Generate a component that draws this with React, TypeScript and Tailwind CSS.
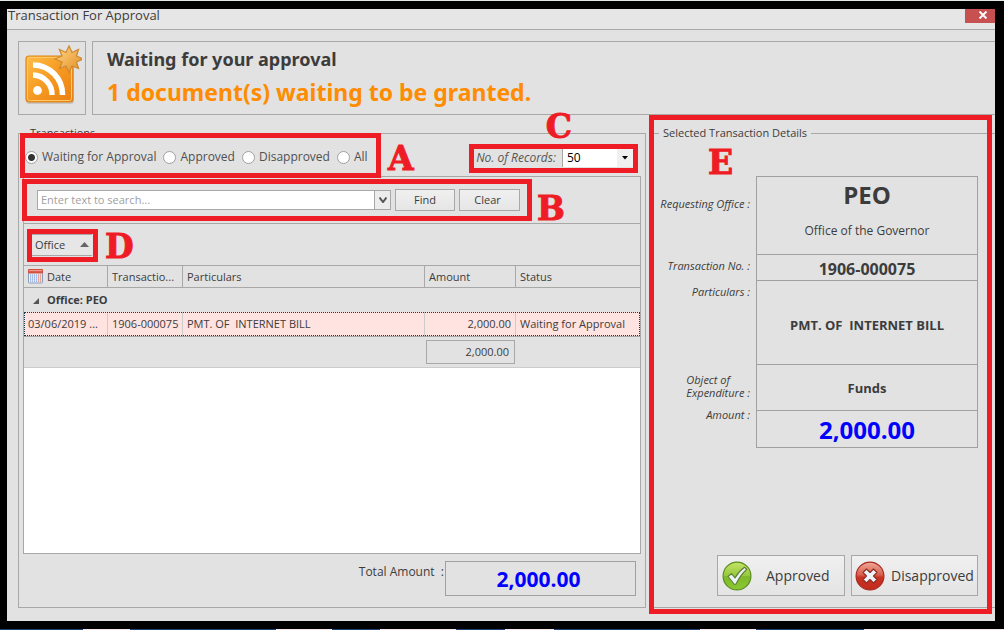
import React from "react";

const FRAME = "absolute border-5 border-[#ee1c25] pointer-events-none z-10";
const LETTER =
  "absolute z-10 pointer-events-none font-['DejaVu_Serif',serif] text-[33px] leading-[33px] font-bold text-[#ee1c25] [-webkit-text-stroke:1px_#ee1c25]";

function FeedIcon() {
  return (
    <svg viewBox="0 0 60 62" className="mb-1 h-[62px] w-[60px]" aria-hidden="true">
      <defs>
        <linearGradient id="feed" x1="0" y1="0" x2="1" y2="1">
          <stop offset="0" stopColor="#ffbe48" />
          <stop offset="0.5" stopColor="#f59a22" />
          <stop offset="1" stopColor="#ea7f10" />
        </linearGradient>
        <linearGradient id="star" x1="0" y1="0" x2="1" y2="1">
          <stop offset="0" stopColor="#ffd98a" />
          <stop offset="1" stopColor="#e28a1e" />
        </linearGradient>
      </defs>
      <rect x="4" y="13" width="48" height="46" rx="3" fill="#000" opacity="0.12" />
      <rect x="4" y="11" width="47" height="46" rx="3" fill="url(#feed)" stroke="#e0851c" strokeWidth="1.2" />
      <rect x="5.5" y="12.5" width="44" height="43" rx="2" fill="none" stroke="#ffc869" strokeWidth="1" />
      <circle cx="15.5" cy="45.5" r="4.4" fill="#fff" />
      <path d="M11 30a19.500 19.500 0 0 1 19 20" fill="none" stroke="#fff" strokeWidth="5.4" />
      <path d="M11 20a29.500 29.500 0 0 1 29.500 30" fill="none" stroke="#fff" strokeWidth="5.6" />
      <path
        d="M47 1l3 6.500 6.500-3-2 6.500L61 14l-6.500 3 2 6.500-6.500-2.500L47 27.500 44 21l-6.500 2.500 2.500-6.500-7-3 7-3-2.500-6.500L44 7.500z"
        fill="url(#star)"
        stroke="#cf8a34"
        strokeWidth="1.3"
      />
    </svg>
  );
}

function CalendarIcon() {
  return (
    <svg viewBox="0 0 15 15" className="h-[15px] w-[15px] shrink-0" aria-hidden="true">
      <rect x="0.5" y="0.5" width="14" height="13.5" rx="1" fill="#eef3fb" stroke="#8a9bb5" />
      <rect x="0" y="0" width="15" height="4.5" rx="1" fill="#d4513f" />
      <rect x="1" y="1" width="13" height="1.2" fill="#ee9a8b" />
      <g fill="#7b9fe0">
        {[5.5, 7.5, 9.5, 11.5].map((y) =>
          [2, 4, 6, 8].map((x) => <rect key={`${x}-${y}`} x={x} y={y} width="1.2" height="1.2" />)
        )}
      </g>
      <g fill="#e0705c">
        {[5.5, 7.5, 9.5, 11.5].map((y) =>
          [10, 12].map((x) => <rect key={`${x}-${y}`} x={x} y={y} width="1.2" height="1.2" />)
        )}
      </g>
    </svg>
  );
}

function ApproveIcon() {
  return (
    <svg viewBox="0 0 30 30" className="size-[30px] shrink-0" aria-hidden="true">
      <defs>
        <linearGradient id="green" x1="0" y1="0" x2="0" y2="1">
          <stop offset="0" stopColor="#c6e36a" />
          <stop offset="0.5" stopColor="#94c93a" />
          <stop offset="0.52" stopColor="#7fb92a" />
          <stop offset="1" stopColor="#8cc832" />
        </linearGradient>
      </defs>
      <circle cx="15" cy="15" r="13.9" fill="url(#green)" stroke="#5a8c22" strokeWidth="1.2" />
      <path
        d="M6 15.500l3.500-2.800 3.500 4.300c2.700-5 5.500-8 9.500-10.800l2.200 2.300c-4.500 3.800-7.700 8.300-10.700 14.500l-1.500 0.500z"
        fill="#eef3f8"
        stroke="#5d7f35"
        strokeWidth="1.1"
        strokeLinejoin="round"
      />
    </svg>
  );
}

function RejectIcon() {
  return (
    <svg viewBox="0 0 30 30" className="size-[30px] shrink-0" aria-hidden="true">
      <defs>
        <linearGradient id="red" x1="0" y1="0" x2="0" y2="1">
          <stop offset="0" stopColor="#f0a898" />
          <stop offset="0.45" stopColor="#d9604f" />
          <stop offset="0.55" stopColor="#c93324" />
          <stop offset="1" stopColor="#c22a1c" />
        </linearGradient>
      </defs>
      <circle cx="15" cy="15" r="13.9" fill="url(#red)" stroke="#a82a20" strokeWidth="1.2" />
      <path
        d="M11.500 8l3.500 3.500L18.500 8l3.500 3.500-3.500 3.500 3.500 3.500-3.500 3.500-3.500-3.500-3.500 3.500L8 18.500l3.500-3.500L8 11.500z"
        fill="#eef3f8"
        stroke="#8e2a22"
        strokeWidth="1.1"
        strokeLinejoin="round"
      />
    </svg>
  );
}

function RadioOption({ label, checked }: { label: string; checked?: boolean }) {
  return (
    <label className="flex items-center gap-1 text-[12px] leading-4 whitespace-nowrap text-[#505050]">
      <input
        type="radio"
        name="status"
        defaultChecked={checked}
        className="size-[13px] shrink-0 appearance-none rounded-full border border-[#a0a0a0] bg-white checked:bg-[radial-gradient(circle,#333_0_3px,#fff_4px)]"
      />
      {label}
    </label>
  );
}

const TH = "h-[22px] border-b border-[#a8a8a8] px-1 text-left font-normal";
const TD = "h-6 bg-[#ffe3e0] px-1 whitespace-pre";
const CELL = "flex items-center justify-center border-b border-[#a0a0a0] font-bold";
const KEY = "pr-[2px] text-right text-[11px] leading-[13px] italic";

export default function App() {
  return (
    <div className="flex min-h-screen flex-col border-t border-[#e3e8e8] bg-black font-['Open_Sans','Noto_Sans',sans-serif] text-[#3c3c3c]">
      <div className="mt-2 mr-[9px] mb-2 ml-[7px] flex grow flex-col overflow-hidden bg-[#e2e2e2]">
        <header className="flex h-[21px] items-start justify-between border-b border-[#a8a8a8] bg-[#e6e6e6]">
          <h1 className="pl-px text-[13px] leading-[13px] whitespace-nowrap">Transaction For Approval</h1>
          <button
            type="button"
            aria-label="Close"
            className="flex h-[14px] w-[30px] items-center justify-center bg-[#c75050] pb-[2px] pl-[6px]"
          >
            <svg viewBox="0 0 10 8" className="h-2 w-[10px]" aria-hidden="true">
              <path d="M1.500 0.500l7 7M8.500 0.500l-7 7" stroke="#fff" strokeWidth="2" />
            </svg>
          </button>
        </header>

        <section className="mt-[11px] ml-[11px] flex h-[74px] gap-[6px]">
          <div className="flex w-[68px] shrink-0 items-center justify-center border border-[#a8a8a8]">
            <FeedIcon />
          </div>
          <div className="grow border-y border-l border-[#a8a8a8] pl-[14px] font-['Noto_Sans','Open_Sans',sans-serif] font-bold">
            <h2 className="pt-[5px] text-[18px] leading-6">Waiting for your approval</h2>
            <p className="pt-[5px] text-[23px] leading-8 text-[#ff8c00]">1 document(s) waiting to be granted.</p>
          </div>
        </section>

        <main className="mt-[10px] mb-[13px] ml-[11px] flex grow gap-2">
          <fieldset className="relative flex min-w-0 grow flex-col border border-[#a8a8a8] px-1 pb-[11px]">
            <legend className="ml-[3px] px-1 text-[11px] leading-4">Transactions</legend>
            <div className="flex h-[35px] shrink-0 items-start justify-between pt-2 pr-2 pl-[2px]">
              <div className="flex gap-[7px]">
                <RadioOption label="Waiting for Approval" checked />
                <RadioOption label="Approved" />
                <RadioOption label="Disapproved" />
                <RadioOption label="All" />
              </div>
              <div className="flex items-center">
                <label htmlFor="records" className="pr-[6px] text-[12px] leading-4 whitespace-nowrap text-[#555] italic">
                  No. of Records:
                </label>
                <div className="relative flex">
                  <select
                    id="records"
                    className="h-[18px] w-[71px] appearance-none border-l border-[#a8a8a8] bg-white pl-1 text-[12px] leading-4 text-black"
                  >
                    <option>50</option>
                  </select>
                  <span className="pointer-events-none absolute inset-y-0 right-0 flex w-4 items-center justify-center bg-[#f0f0f0]">
                    <svg viewBox="0 0 6 4" className="h-1 w-[6px]" aria-hidden="true">
                      <path d="M0 0h6L3 3.500z" fill="#000" />
                    </svg>
                  </span>
                </div>
              </div>
            </div>

            <div className="flex grow flex-col border border-[#a8a8a8] bg-white text-[11px] leading-4">
              <div className="flex h-[47px] shrink-0 items-center gap-1 border-b border-[#a8a8a8] bg-[#e2e2e2] pl-[13px]">
                <div className="flex h-5 w-[354px] border border-[#a8a8a8] bg-white">
                  <input
                    type="text"
                    aria-label="Search"
                    placeholder="Enter text to search..."
                    className="min-w-0 grow px-[3px] placeholder:text-[#a0a0a0]"
                  />
                  <button
                    type="button"
                    aria-label="Search history"
                    className="flex w-4 items-center justify-center border-l border-[#a8a8a8] bg-[#ececec]"
                  >
                    <svg viewBox="0 0 8 6" className="h-[6px] w-2" aria-hidden="true">
                      <path d="M0.500 0.500L4 5L7.500 0.500" fill="none" stroke="#555" strokeWidth="2" />
                    </svg>
                  </button>
                </div>
                <button
                  type="button"
                  className="h-[22px] w-[60px] border border-[#a8a8a8] bg-linear-to-b from-[#f0f0f0] to-[#e6e6e6]"
                >
                  Find
                </button>
                <button
                  type="button"
                  className="h-[22px] w-[61px] border border-[#a8a8a8] bg-linear-to-b from-[#f0f0f0] to-[#e6e6e6] pr-1"
                >
                  Clear
                </button>
              </div>

              <div className="flex h-[42px] shrink-0 items-center border-b border-[#a8a8a8] bg-[#e2e2e2] pl-2">
                <button
                  type="button"
                  className="flex h-[22px] w-[60px] items-center justify-between border-y border-[#a8a8a8] bg-[#e6e6e6] px-[3px]"
                >
                  Office
                  <svg viewBox="0 0 9 5" className="h-[5px] w-[9px]" aria-hidden="true">
                    <path d="M0 5h9L4.500 0z" fill="#666" />
                  </svg>
                </button>
              </div>

              <table className="w-full table-fixed border-separate border-spacing-0 bg-[#e2e2e2]">
                <colgroup>
                  <col className="w-[84px]" />
                  <col className="w-[75px]" />
                  <col />
                  <col className="w-[91px]" />
                  <col className="w-[124px]" />
                </colgroup>
                <thead>
                  <tr>
                    <th className={`${TH} border-r`}>
                      <span className="flex items-center gap-1">
                        <CalendarIcon />
                        Date
                      </span>
                    </th>
                    <th className={`${TH} border-r`}>Transactio...</th>
                    <th className={`${TH} border-r`}>Particulars</th>
                    <th className={`${TH} border-r`}>Amount</th>
                    <th className={TH}>Status</th>
                  </tr>
                </thead>
                <tbody>
                  <tr>
                    <td colSpan={5} className="h-6 px-2">
                      <span className="flex items-center gap-2 font-bold">
                        <svg viewBox="0 0 7 7" className="size-[7px]" aria-hidden="true">
                          <path d="M7 1v6H1z" fill="#555" />
                        </svg>
                        Office: PEO
                      </span>
                    </td>
                  </tr>
                  <tr className="outline-1 -outline-offset-1 outline-dotted outline-[#123a55]">
                    <td className={`${TD} border-r border-[#ccc]`}>03/06/2019 ...</td>
                    <td className={`${TD} border-r border-[#ccc]`}>1906-000075</td>
                    <td className={`${TD} border-r border-[#ccc]`}>{"PMT. OF  INTERNET BILL"}</td>
                    <td className={`${TD} border-r border-[#ccc] text-right`}>2,000.00</td>
                    <td className={TD}>Waiting for Approval</td>
                  </tr>
                </tbody>
                <tfoot>
                  <tr>
                    <td colSpan={3} className="h-8 border-t border-b border-t-[#a8a8a8] border-b-[#ccc]" />
                    <td className="border-t border-b border-t-[#a8a8a8] border-b-[#ccc] pr-px pl-px">
                      <div className="h-6 border border-[#a8a8a8] pr-[5px] text-right leading-[22px]">2,000.00</div>
                    </td>
                    <td className="border-t border-b border-t-[#a8a8a8] border-b-[#ccc]" />
                  </tr>
                </tfoot>
              </table>
            </div>

            <div className="mt-[7px] flex shrink-0 justify-end pr-[5px]">
              <span className="pt-[3px] pr-px text-[12px] leading-4 whitespace-pre">{"Total Amount  :"}</span>
              <output className="flex h-[35px] w-[191px] items-center justify-center border border-[#a0a0a0] pr-1 text-[21px] leading-6 font-bold text-[#0000ff]">
                2,000.00
              </output>
            </div>

            <div className={`${FRAME} -top-2 left-px h-[45px] w-[361px]`} />
            <div className={`${FRAME} top-[38px] left-[3px] h-[42px] w-[510px]`} />
            <div className={`${FRAME} top-[3px] right-[7px] h-[29px] w-[169px]`} />
            <div className={`${FRAME} top-[88px] left-2 h-[33px] w-[71px]`} />
            <span className={`${LETTER} top-px left-[369px]`}>A</span>
            <span className={`${LETTER} top-[51px] left-[518px]`}>B</span>
            <span className={`${LETTER} top-[-31px] right-[73px]`}>C</span>
            <span className={`${LETTER} top-[89px] left-[86px]`}>D</span>
          </fieldset>

          <fieldset className="relative flex w-[341px] shrink-0 flex-col border-y border-[#a8a8a8] pr-[17px] pb-[11px]">
            <legend className="ml-[5px] px-1 text-[11px] leading-4">Selected Transaction Details</legend>
            <dl className="mt-[35px] grid grid-cols-[98px_1fr] gap-x-1">
              <dt className={`${KEY} pt-[21px]`}>Requesting Office :</dt>
              <dd className="flex h-[79px] flex-col items-center border border-[#a0a0a0] pt-[3px]">
                <strong className="text-[24px] leading-[30px]">PEO</strong>
                <span className="pt-[13px] text-[12px] leading-4">Office of the Governor</span>
              </dd>
              <dt className={`${KEY} pt-1`}>Transaction No. :</dt>
              <dd className={`${CELL} h-[26px] border-x pt-[2px] text-[16px] leading-5`}>1906-000075</dd>
              <dt className={`${KEY} pt-1`}>Particulars :</dt>
              <dd className={`${CELL} h-[84px] border-x pt-1 text-[13px] leading-4 whitespace-pre`}>
                {"PMT. OF  INTERNET BILL"}
              </dd>
              <dt className={`${KEY} flex justify-end pt-2`}>
                <span className="text-left">
                  Object of
                  <br />
                  Expenditure :
                </span>
              </dt>
              <dd className={`${CELL} h-[46px] border-x text-[13px] leading-4`}>Funds</dd>
              <dt className={`${KEY} -mt-[3px]`}>Amount :</dt>
              <dd className={`${CELL} h-[37px] border-x pt-[2px] text-[24px] leading-8 text-[#0000ff]`}>2,000.00</dd>
            </dl>

            <div className="mt-auto flex justify-end gap-[6px] text-[14px] leading-5">
              <button
                type="button"
                className="flex h-[41px] w-[128px] items-center gap-[14px] border border-[#a8a8a8] bg-linear-to-b from-[#f0f0f0] to-[#e4e4e4] pl-1"
              >
                <ApproveIcon />
                Approved
              </button>
              <button
                type="button"
                className="flex h-[41px] w-[127px] items-center gap-[6px] border border-[#a8a8a8] bg-linear-to-b from-[#f0f0f0] to-[#e4e4e4] pl-[3px]"
              >
                <RejectIcon />
                Disapproved
              </button>
            </div>

            <div className={`${FRAME} top-[-26px] right-[3px] -bottom-[7px] -left-[5px]`} />
            <span className={`${LETTER} top-[5px] left-[54px]`}>E</span>
          </fieldset>
        </main>
      </div>
      <div className="h-px bg-[linear-gradient(90deg,#1f3f77_0_83px,#f3e6ea_83px_130px,#1f3f77_130px_276px,#f3e6ea_276px_332px,#1f3f77_332px_380px,#f3e6ea_380px_456px,#1f3f77_456px_505px,#f3e6ea_505px_554px,#1f3f77_554px_700px,#f3e6ea_700px_756px,#1f3f77_756px_864px,#f3e6ea_864px)]" />
    </div>
  );
}
